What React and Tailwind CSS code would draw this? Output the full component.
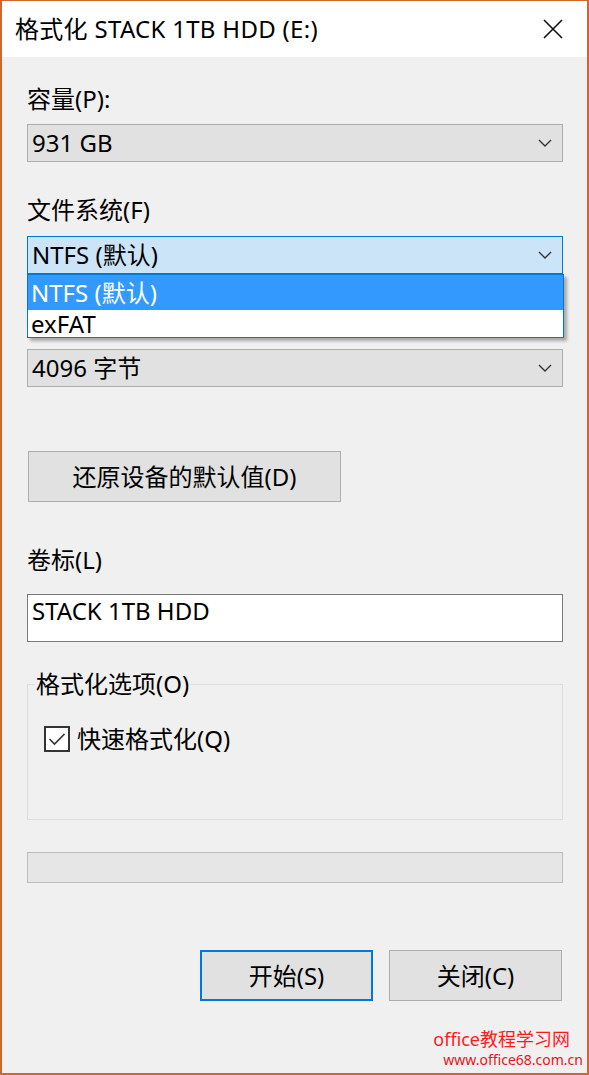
import React from 'react'

const font = { fontFamily: '"Noto Sans", "Noto Sans CJK SC", sans-serif' }

function Chevron() {
  return (
    <svg width="14" height="8" viewBox="0 0 14 8" className="shrink-0">
      <path d="M1 1 L7 7 L13 1" fill="none" stroke="#333" strokeWidth="1.4" />
    </svg>
  )
}

function Combo({ value, focused, children }) {
  return (
    <div className="relative">
      <div
        className={
          'h-[38px] flex items-center justify-between pl-[4px] pr-[10px] border ' +
          (focused ? 'bg-[#cce4f7] border-[#0078d7]' : 'bg-[#e1e1e1] border-[#adadad]')
        }
      >
        <span className="text-[24px] leading-none text-black">{value}</span>
        <Chevron />
      </div>
      {children}
    </div>
  )
}

function Button({ label, primary, className }) {
  return (
    <div
      className={
        'h-[51px] flex items-center justify-center bg-[#e1e1e1] text-[24px] text-black ' +
        (primary ? 'border-2 border-[#0078d7]' : 'border border-[#adadad]') +
        ' ' +
        (className || '')
      }
    >
      {label}
    </div>
  )
}

export default function App() {
  return (
    <div
      style={font}
      className="w-[589px] h-[1075px] bg-[#f0f0f0] border-l-2 border-r-2 border-t border-b-2 border-[#d0652d] flex flex-col overflow-hidden"
    >
      {/* title bar */}
      <div className="h-[56px] bg-white flex items-center justify-between pl-[13px] pr-[24px] shrink-0">
        <span className="text-[24px] text-black leading-none tracking-[0.3px]">格式化 STACK 1TB HDD (E:)</span>
        <svg width="20" height="20" viewBox="0 0 20 20">
          <path d="M1 1 L19 19 M19 1 L1 19" stroke="#111" strokeWidth="1.6" />
        </svg>
      </div>

      <div className="flex flex-col pl-[25px] pr-[24px]">
        <div className="mt-[28px] h-[28px] leading-[28px] text-[24px] text-black">容量(P):</div>
        <div className="mt-[11px]">
          <Combo value="931 GB" />
        </div>

        <div className="mt-[34px] h-[28px] leading-[28px] text-[24px] text-black">文件系统(F)</div>
        <div className="mt-[12px] z-10">
          <Combo value="NTFS (默认)" focused>
            <div className="absolute left-0 right-[-1px] top-full bg-white border border-[#0078d7] shadow-[3px_3px_3px_rgba(0,0,0,0.3)]">
              <div className="h-[35px] bg-[#3399ff] text-white text-[24px] flex items-center pl-[3px]">NTFS (默认)</div>
              <div className="h-[27px] text-black text-[24px] flex items-center pl-[3px]">exFAT</div>
            </div>
          </Combo>
        </div>

        <div className="mt-[75px]">
          <Combo value="4096 字节" />
        </div>

        <Button label="还原设备的默认值(D)" className="mt-[64px] ml-[1px] w-[313px]" />

        <div className="mt-[44px] h-[28px] leading-[28px] text-[24px] text-black">卷标(L)</div>
        <div className="mt-[20px] h-[48px] bg-white border border-[#7a7a7a] px-[4px] pt-[1px] text-[24px] leading-[30px] text-black">
          STACK 1TB HDD
        </div>

        <fieldset className="mt-[28px] h-[150px] border border-[#dcdcdc] px-[16px]">
          <legend className="ml-[-9px] px-[1px] text-[24px] leading-[28px] text-black">格式化选项(O)</legend>
          <div className="mt-[27px] flex items-center gap-[7px]">
            <div className="w-[26px] h-[26px] border-2 border-[#333] bg-white flex items-center justify-center">
              <svg width="18" height="14" viewBox="0 0 18 14">
                <path d="M1.5 7 L6.5 12 L16.5 2" fill="none" stroke="#333" strokeWidth="1.6" />
              </svg>
            </div>
            <span className="text-[24px] leading-[28px] text-black">快速格式化(Q)</span>
          </div>
        </fieldset>

        <div className="mt-[32px] h-[31px] bg-[#e6e6e6] border border-[#bcbcbc]" />

        <div className="mt-[67px] flex justify-end gap-[16px] pr-[1px]">
          <Button label="开始(S)" primary className="w-[173px]" />
          <Button label="关闭(C)" className="w-[173px]" />
        </div>
      </div>

      <div className="mt-[26px] flex flex-col items-end pr-[17px]">
        <span className="text-[18px] leading-[24px] text-[#ff1a1a]">office教程学习网</span>
        <span className="mr-[-13px] text-[14px] leading-[18px] text-[#e8141c]">www.office68.com.cn</span>
      </div>
    </div>
  )
}
